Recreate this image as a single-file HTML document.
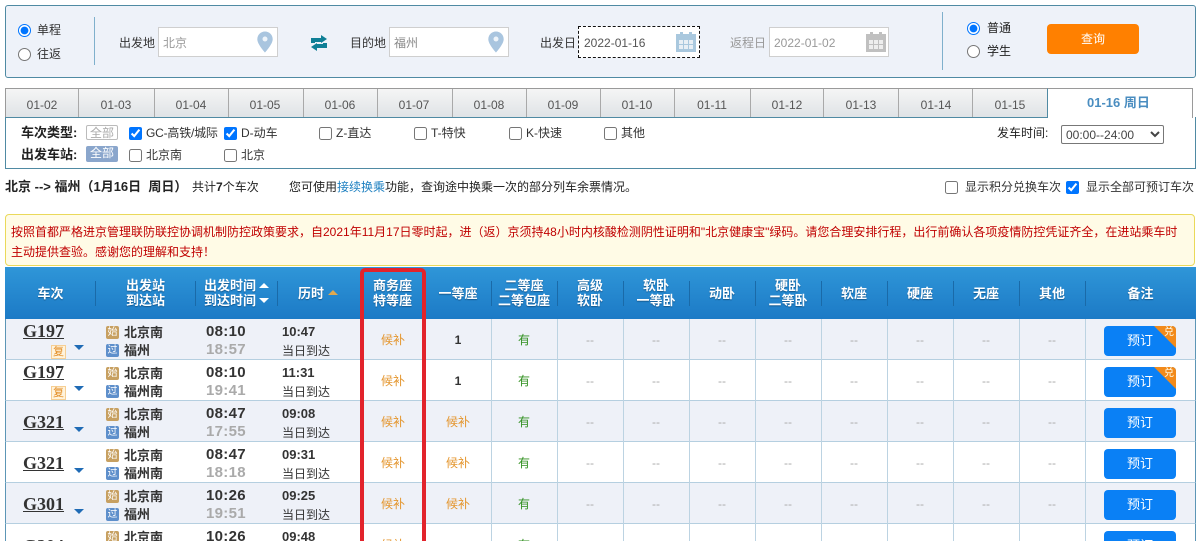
<!DOCTYPE html>
<html lang="zh"><head><meta charset="utf-8"><style>
*{box-sizing:border-box}
html,body{margin:0;padding:0;background:#fff}
#p{position:relative;width:1198px;height:541px;overflow:hidden;font:12px/16px "Liberation Sans","Noto Sans CJK SC",sans-serif;color:#333}
#p span,#p div,#p svg,#p input,#p select{position:absolute}
#p span{white-space:nowrap}
input{margin:0;width:13px;height:13px}
.sb{left:5px;top:5px;width:1191px;height:73px;background:#eef2f9;border:1px solid #4f8aa3;border-radius:3px}
.vl{width:1px;background:#7fb0cc}
.in{height:30px;background:#fff;border:1px solid #cfcfcf}
.gr{color:#999}
.tabs{left:5px;top:88px;width:1188px;height:30px;background:linear-gradient(#f5f5f5,#dfe3e6);border:1px solid #9a9a9a;border-bottom:1px solid #4f8aa3}
.t{top:97px;width:74px;text-align:center;color:#555}
.ts{top:89px;width:1px;height:28px;background:#a9a9a9}
.fil{left:5px;top:117px;width:1191px;height:52px;border:1px solid #4f8aa3;border-top:0}
.b{font-weight:bold;color:#222}
.tag{width:32px;height:15px;border-radius:2px;text-align:center;line-height:14px;font-size:12px}
.hd{left:5px;top:267px;width:1191px;height:52px;background:linear-gradient(#2f96d8,#1c7ac6)}
.h{color:#fff;font-weight:bold;font-size:13px;line-height:15px;text-align:center;text-shadow:0 1px 1px #14598f}
.hs{top:281px;width:1px;height:25px;background:#1a6aa8}
.r{left:5px;width:1191px;height:41px;border-bottom:1px solid #b5cfe0;border-left:1px solid #5c96b6;border-right:1px solid #5c96b6}
.o{background:#eef1f8}
.cv{top:0;width:1px;height:41px;background:#bcd3e2}
.g{left:17px;font:bold 18px/20px "Liberation Serif",serif;color:#333;text-decoration:underline}
.ar{left:68px;width:0;height:0;margin-top:-1px;border-left:5px solid transparent;border-right:5px solid transparent;border-top:5px solid #1f6bb5}
.fu{left:45px;top:26px;width:15px;height:14px;background:#fff3dc;border:1px solid #f6cf94;color:#e28a1f;font-size:11px;line-height:12px;text-align:center}
.i1,.i2{left:100px;width:13px;height:13px;border-radius:2px;color:#fff;font-size:10px;line-height:13px;text-align:center}
.i1{top:7px;background:#c7a061}.i2{top:25px;background:#5e8fcb}
.st{left:118px;margin-top:1px;font-weight:bold;font-size:13px;color:#333}
.tm{left:200px;margin-top:1px;font:bold 15px/18px "Liberation Sans",sans-serif;color:#333;letter-spacing:.3px}
.tg{color:#aaa}
.du{left:276px;margin-top:1px;font:bold 13px/16px "Liberation Sans",sans-serif;color:#333}
.dd{left:276px;top:24px}
.c{top:13px;text-align:center;width:66px}
.or{color:#e4952c}.gn{color:#2f8f1e}.da{color:#aaa}
.num{font-weight:bold;color:#333}
.btn{left:1098px;top:7px;width:72px;height:30px;background:#0a80f5;border-radius:4px;color:#fff;text-align:center;line-height:30px;font-size:13px;overflow:hidden}
.red{left:360px;top:268px;width:66px;height:290px;border:4px solid #e2232b;border-radius:5px}
</style></head><body><div id="p">

<div class="sb"></div>
<input type="radio" checked style="left:18px;top:24px"><span style="left:37px;top:22px">单程</span>
<input type="radio" style="left:18px;top:48px"><span style="left:37px;top:46px">往返</span>
<div class="vl" style="left:94px;top:17px;height:48px"></div>
<span style="left:119px;top:35px">出发地</span>
<div class="in" style="left:158px;top:27px;width:120px"></div><span class="gr" style="left:163px;top:35px">北京</span>
<svg style="left:257px;top:31px" width="16" height="22" viewBox="0 0 16 22"><path d="M8 0.5a7.7 7.7 0 0 0-7.7 7.7c0 5 7.7 13.3 7.7 13.3s7.7-8.3 7.7-13.3a7.7 7.7 0 0 0-7.7-7.7z" fill="#a9c5df"/><circle cx="8" cy="8" r="2.5" fill="#eef4fa"/></svg>
<svg style="left:310px;top:35px" width="18" height="16" viewBox="0 0 18 16"><path d="M1 8V3h10V0l6 4-6 4V7H5v1zM17 8v5H7v3l-6-4 6-4v1h6V8z" fill="#0f7f96"/></svg>
<span style="left:350px;top:35px">目的地</span>
<div class="in" style="left:389px;top:27px;width:120px"></div><span style="left:394px;top:35px;color:#888">福州</span>
<svg style="left:488px;top:31px" width="16" height="22" viewBox="0 0 16 22"><path d="M8 0.5a7.7 7.7 0 0 0-7.7 7.7c0 5 7.7 13.3 7.7 13.3s7.7-8.3 7.7-13.3a7.7 7.7 0 0 0-7.7-7.7z" fill="#a9c5df"/><circle cx="8" cy="8" r="2.5" fill="#eef4fa"/></svg>
<span style="left:540px;top:35px">出发日</span>
<div style="left:578px;top:26px;width:122px;height:32px;background:#fff;border:1px dashed #111"></div>
<span style="left:584px;top:35px;color:#555">2022-01-16</span>
<svg style="left:676px;top:31px" width="20" height="21" viewBox="0 0 20 21"><path d="M0 3h4V1h3v2h6V1h3v2h4v18H0z" fill="#a9c8de"/><path d="M3 9h14v9H3z" fill="#e8eff5"/><path d="M7.5 9v9M12.5 9v9M3 13.5h14" stroke="#a9c8de" fill="none"/></svg>
<span class="gr" style="left:730px;top:35px">返程日</span>
<div class="in" style="left:769px;top:27px;width:120px"></div><span class="gr" style="left:774px;top:35px">2022-01-02</span>
<svg style="left:866px;top:31px" width="20" height="21" viewBox="0 0 20 21"><path d="M0 3h4V1h3v2h6V1h3v2h4v18H0z" fill="#c0c0c0"/><path d="M3 9h14v9H3z" fill="#eee"/><path d="M7.5 9v9M12.5 9v9M3 13.5h14" stroke="#c0c0c0" fill="none"/></svg>
<div class="vl" style="left:942px;top:12px;height:58px"></div>
<input type="radio" checked style="left:967px;top:22px"><span style="left:987px;top:20px;color:#222">普通</span>
<input type="radio" style="left:967px;top:45px"><span style="left:987px;top:43px;color:#222">学生</span>
<div style="left:1047px;top:24px;width:92px;height:30px;background:#ff8000;border-radius:4px;color:#fff;text-align:center;line-height:30px">查询</div>

<div class="tabs"></div>
<div style="left:1047px;top:88px;width:146px;height:30px;background:#fff;border:1px solid #9a9a9a;border-bottom:0;border-left-color:#4f8aa3"></div>
<div class="ts" style="left:78px"></div><div class="ts" style="left:154px"></div><div class="ts" style="left:228px"></div><div class="ts" style="left:303px"></div><div class="ts" style="left:377px"></div><div class="ts" style="left:452px"></div><div class="ts" style="left:526px"></div><div class="ts" style="left:600px"></div><div class="ts" style="left:674px"></div><div class="ts" style="left:750px"></div><div class="ts" style="left:823px"></div><div class="ts" style="left:898px"></div><div class="ts" style="left:972px"></div>
<span class="t" style="left:5px">01-02</span><span class="t" style="left:79px">01-03</span><span class="t" style="left:154px">01-04</span><span class="t" style="left:228px">01-05</span><span class="t" style="left:303px">01-06</span><span class="t" style="left:377px">01-07</span><span class="t" style="left:452px">01-08</span><span class="t" style="left:526px">01-09</span><span class="t" style="left:600px">01-10</span><span class="t" style="left:675px">01-11</span><span class="t" style="left:750px">01-12</span><span class="t" style="left:824px">01-13</span><span class="t" style="left:899px">01-14</span><span class="t" style="left:973px">01-15</span>
<span style="left:1087px;top:95px;font-weight:bold;color:#4a8dc0;font-size:13px">01-16 周日</span>

<div class="fil"></div>
<span class="b" style="left:21px;top:125px;font-size:13px">车次类型:</span>
<span class="tag" style="left:86px;top:125px;border:1px solid #bbb;color:#aaa">全部</span>
<input type="checkbox" checked style="left:129px;top:127px"><span style="left:146px;top:125px;letter-spacing:-.2px">GC-高铁/城际</span>
<input type="checkbox" checked style="left:224px;top:127px"><span style="left:241px;top:125px">D-动车</span>
<input type="checkbox" style="left:319px;top:127px"><span style="left:336px;top:125px">Z-直达</span>
<input type="checkbox" style="left:414px;top:127px"><span style="left:431px;top:125px">T-特快</span>
<input type="checkbox" style="left:509px;top:127px"><span style="left:526px;top:125px">K-快速</span>
<input type="checkbox" style="left:604px;top:127px"><span style="left:621px;top:125px">其他</span>
<span style="left:997px;top:125px;color:#222">发车时间:</span>
<select style="left:1061px;top:125px;width:103px;height:19px;font:12px 'Liberation Sans',sans-serif;color:#444;background:#fff;border:1px solid #777;border-radius:2px;padding:0"><option>00:00--24:00</option></select>
<span class="b" style="left:21px;top:147px;font-size:13px">出发车站:</span>
<span class="tag" style="left:86px;top:146px;background:#8aa6cc;color:#fff;height:16px">全部</span>
<input type="checkbox" style="left:129px;top:149px"><span style="left:146px;top:147px">北京南</span>
<input type="checkbox" style="left:224px;top:149px"><span style="left:241px;top:147px">北京</span>

<span class="b" style="left:5px;top:179px;font-size:13px">北京 --&gt; 福州（1月16日&nbsp; 周日）</span>
<span style="left:192px;top:179px;color:#222">共计<b>7</b>个车次</span>
<span style="left:289px;top:179px;color:#222">您可使用<span style="position:static;color:#1c7fc0">接续换乘</span>功能，查询途中换乘一次的部分列车余票情况。</span>
<input type="checkbox" style="left:945px;top:181px"><span style="left:965px;top:179px">显示积分兑换车次</span>
<input type="checkbox" checked style="left:1066px;top:181px"><span style="left:1086px;top:179px">显示全部可预订车次</span>

<div style="left:5px;top:214px;width:1190px;height:52px;background:#fffbe6;border:1px solid #ead95a;border-radius:4px"></div>
<span style="left:11px;top:224px;color:#c00000">按照首都严格进京管理联防联控协调机制防控政策要求，自2021年11月17日零时起，进（返）京须持48小时内核酸检测阴性证明和"北京健康宝"绿码。请您合理安排行程，出行前确认各项疫情防控凭证齐全，在进站乘车时</span>
<span style="left:11px;top:244px;color:#c00000">主动提供查验。感谢您的理解和支持！</span>

<div class="hd"></div>
<span class="h" style="left:5px;top:286px;width:91px">车次</span>
<span class="h" style="left:96px;top:278px;width:99px">出发站<br>到达站</span>
<span class="h" style="left:200px;top:278px;width:60px">出发时间<br>到达时间</span>
<div style="left:259px;top:283px;border-left:5px solid transparent;border-right:5px solid transparent;border-bottom:5px solid #fff"></div>
<div style="left:259px;top:298px;border-left:5px solid transparent;border-right:5px solid transparent;border-top:5px solid #fff"></div>
<span class="h" style="left:298px;top:286px">历时</span>
<div style="left:328px;top:290px;border-left:5px solid transparent;border-right:5px solid transparent;border-bottom:5px solid #e0a84e"></div>
<span class="h" style="left:360px;top:278px;width:65px">商务座<br>特等座</span>
<span class="h" style="left:425px;top:286px;width:66px">一等座</span>
<span class="h" style="left:491px;top:278px;width:66px">二等座<br>二等包座</span>
<span class="h" style="left:557px;top:278px;width:66px">高级<br>软卧</span>
<span class="h" style="left:623px;top:278px;width:66px">软卧<br>一等卧</span>
<span class="h" style="left:689px;top:286px;width:66px">动卧</span>
<span class="h" style="left:755px;top:278px;width:66px">硬卧<br>二等卧</span>
<span class="h" style="left:821px;top:286px;width:66px">软座</span>
<span class="h" style="left:887px;top:286px;width:66px">硬座</span>
<span class="h" style="left:953px;top:286px;width:66px">无座</span>
<span class="h" style="left:1019px;top:286px;width:66px">其他</span>
<span class="h" style="left:1085px;top:286px;width:111px">备注</span>
<div class="hs" style="left:95px"></div><div class="hs" style="left:195px"></div><div class="hs" style="left:277px"></div><div class="hs" style="left:491px"></div><div class="hs" style="left:557px"></div><div class="hs" style="left:623px"></div><div class="hs" style="left:689px"></div><div class="hs" style="left:755px"></div><div class="hs" style="left:821px"></div><div class="hs" style="left:887px"></div><div class="hs" style="left:953px"></div><div class="hs" style="left:1019px"></div><div class="hs" style="left:1085px"></div>

<!-- row 1 -->
<div class="r o" style="top:319px">
<div class="cv" style="left:354px"></div><div class="cv" style="left:419px"></div><div class="cv" style="left:485px"></div><div class="cv" style="left:551px"></div><div class="cv" style="left:617px"></div><div class="cv" style="left:683px"></div><div class="cv" style="left:749px"></div><div class="cv" style="left:815px"></div><div class="cv" style="left:881px"></div><div class="cv" style="left:947px"></div><div class="cv" style="left:1013px"></div><div class="cv" style="left:1079px"></div>
<span class="g" style="top:2px">G197</span><span class="fu">复</span><div class="ar" style="top:27px"></div>
<span class="i1">始</span><span class="i2">过</span><span class="st" style="top:5px">北京南</span><span class="st" style="top:23px">福州</span>
<span class="tm" style="top:3px">08:10</span><span class="tm tg" style="top:21px">18:57</span>
<span class="du" style="top:4px">10:47</span><span class="dd">当日到达</span>
<span class="c or" style="left:354px">候补</span><span class="c num" style="left:419px">1</span><span class="c gn" style="left:485px">有</span>
<span class="c da" style="left:551px">--</span><span class="c da" style="left:617px">--</span><span class="c da" style="left:683px">--</span><span class="c da" style="left:749px">--</span><span class="c da" style="left:815px">--</span><span class="c da" style="left:881px">--</span><span class="c da" style="left:947px">--</span><span class="c da" style="left:1013px">--</span>
<div class="btn">预订<div style="right:0;top:0;width:0;height:0;border-top:22px solid #f28a1a;border-left:22px solid transparent"></div><span style="right:2px;top:1px;font-size:10px;line-height:12px;color:#ffe">兑</span></div>
</div>
<!-- row 2 -->
<div class="r" style="top:360px">
<div class="cv" style="left:354px"></div><div class="cv" style="left:419px"></div><div class="cv" style="left:485px"></div><div class="cv" style="left:551px"></div><div class="cv" style="left:617px"></div><div class="cv" style="left:683px"></div><div class="cv" style="left:749px"></div><div class="cv" style="left:815px"></div><div class="cv" style="left:881px"></div><div class="cv" style="left:947px"></div><div class="cv" style="left:1013px"></div><div class="cv" style="left:1079px"></div>
<span class="g" style="top:2px">G197</span><span class="fu">复</span><div class="ar" style="top:27px"></div>
<span class="i1">始</span><span class="i2">过</span><span class="st" style="top:5px">北京南</span><span class="st" style="top:23px">福州南</span>
<span class="tm" style="top:3px">08:10</span><span class="tm tg" style="top:21px">19:41</span>
<span class="du" style="top:4px">11:31</span><span class="dd">当日到达</span>
<span class="c or" style="left:354px">候补</span><span class="c num" style="left:419px">1</span><span class="c gn" style="left:485px">有</span>
<span class="c da" style="left:551px">--</span><span class="c da" style="left:617px">--</span><span class="c da" style="left:683px">--</span><span class="c da" style="left:749px">--</span><span class="c da" style="left:815px">--</span><span class="c da" style="left:881px">--</span><span class="c da" style="left:947px">--</span><span class="c da" style="left:1013px">--</span>
<div class="btn">预订<div style="right:0;top:0;width:0;height:0;border-top:22px solid #f28a1a;border-left:22px solid transparent"></div><span style="right:2px;top:1px;font-size:10px;line-height:12px;color:#ffe">兑</span></div>
</div>
<!-- row 3 -->
<div class="r o" style="top:401px">
<div class="cv" style="left:354px"></div><div class="cv" style="left:419px"></div><div class="cv" style="left:485px"></div><div class="cv" style="left:551px"></div><div class="cv" style="left:617px"></div><div class="cv" style="left:683px"></div><div class="cv" style="left:749px"></div><div class="cv" style="left:815px"></div><div class="cv" style="left:881px"></div><div class="cv" style="left:947px"></div><div class="cv" style="left:1013px"></div><div class="cv" style="left:1079px"></div>
<span class="g" style="top:11px">G321</span><div class="ar" style="top:27px"></div>
<span class="i1">始</span><span class="i2">过</span><span class="st" style="top:5px">北京南</span><span class="st" style="top:23px">福州</span>
<span class="tm" style="top:3px">08:47</span><span class="tm tg" style="top:21px">17:55</span>
<span class="du" style="top:4px">09:08</span><span class="dd">当日到达</span>
<span class="c or" style="left:354px">候补</span><span class="c or" style="left:419px">候补</span><span class="c gn" style="left:485px">有</span>
<span class="c da" style="left:551px">--</span><span class="c da" style="left:617px">--</span><span class="c da" style="left:683px">--</span><span class="c da" style="left:749px">--</span><span class="c da" style="left:815px">--</span><span class="c da" style="left:881px">--</span><span class="c da" style="left:947px">--</span><span class="c da" style="left:1013px">--</span>
<div class="btn">预订</div>
</div>
<!-- row 4 -->
<div class="r" style="top:442px">
<div class="cv" style="left:354px"></div><div class="cv" style="left:419px"></div><div class="cv" style="left:485px"></div><div class="cv" style="left:551px"></div><div class="cv" style="left:617px"></div><div class="cv" style="left:683px"></div><div class="cv" style="left:749px"></div><div class="cv" style="left:815px"></div><div class="cv" style="left:881px"></div><div class="cv" style="left:947px"></div><div class="cv" style="left:1013px"></div><div class="cv" style="left:1079px"></div>
<span class="g" style="top:11px">G321</span><div class="ar" style="top:27px"></div>
<span class="i1">始</span><span class="i2">过</span><span class="st" style="top:5px">北京南</span><span class="st" style="top:23px">福州南</span>
<span class="tm" style="top:3px">08:47</span><span class="tm tg" style="top:21px">18:18</span>
<span class="du" style="top:4px">09:31</span><span class="dd">当日到达</span>
<span class="c or" style="left:354px">候补</span><span class="c or" style="left:419px">候补</span><span class="c gn" style="left:485px">有</span>
<span class="c da" style="left:551px">--</span><span class="c da" style="left:617px">--</span><span class="c da" style="left:683px">--</span><span class="c da" style="left:749px">--</span><span class="c da" style="left:815px">--</span><span class="c da" style="left:881px">--</span><span class="c da" style="left:947px">--</span><span class="c da" style="left:1013px">--</span>
<div class="btn">预订</div>
</div>
<!-- row 5 -->
<div class="r o" style="top:483px">
<div class="cv" style="left:354px"></div><div class="cv" style="left:419px"></div><div class="cv" style="left:485px"></div><div class="cv" style="left:551px"></div><div class="cv" style="left:617px"></div><div class="cv" style="left:683px"></div><div class="cv" style="left:749px"></div><div class="cv" style="left:815px"></div><div class="cv" style="left:881px"></div><div class="cv" style="left:947px"></div><div class="cv" style="left:1013px"></div><div class="cv" style="left:1079px"></div>
<span class="g" style="top:11px">G301</span><div class="ar" style="top:27px"></div>
<span class="i1">始</span><span class="i2">过</span><span class="st" style="top:5px">北京南</span><span class="st" style="top:23px">福州</span>
<span class="tm" style="top:3px">10:26</span><span class="tm tg" style="top:21px">19:51</span>
<span class="du" style="top:4px">09:25</span><span class="dd">当日到达</span>
<span class="c or" style="left:354px">候补</span><span class="c or" style="left:419px">候补</span><span class="c gn" style="left:485px">有</span>
<span class="c da" style="left:551px">--</span><span class="c da" style="left:617px">--</span><span class="c da" style="left:683px">--</span><span class="c da" style="left:749px">--</span><span class="c da" style="left:815px">--</span><span class="c da" style="left:881px">--</span><span class="c da" style="left:947px">--</span><span class="c da" style="left:1013px">--</span>
<div class="btn">预订</div>
</div>
<!-- row 6 -->
<div class="r" style="top:524px">
<div class="cv" style="left:354px"></div><div class="cv" style="left:419px"></div><div class="cv" style="left:485px"></div><div class="cv" style="left:551px"></div><div class="cv" style="left:617px"></div><div class="cv" style="left:683px"></div><div class="cv" style="left:749px"></div><div class="cv" style="left:815px"></div><div class="cv" style="left:881px"></div><div class="cv" style="left:947px"></div><div class="cv" style="left:1013px"></div><div class="cv" style="left:1079px"></div>
<span class="g" style="top:12px">G304</span><div class="ar" style="top:27px"></div>
<span class="i1">始</span><span class="st" style="top:5px">北京南</span>
<span class="tm" style="top:3px">10:26</span>
<span class="du" style="top:4px">09:48</span>
<span class="c or" style="left:354px">候补</span><span class="c gn" style="left:485px">有</span>
<span class="c da" style="left:551px">--</span><span class="c da" style="left:617px">--</span><span class="c da" style="left:683px">--</span><span class="c da" style="left:749px">--</span><span class="c da" style="left:815px">--</span><span class="c da" style="left:881px">--</span><span class="c da" style="left:947px">--</span><span class="c da" style="left:1013px">--</span>
<div class="btn">预订</div>
</div>

<div class="red"></div>
</div></body></html>
